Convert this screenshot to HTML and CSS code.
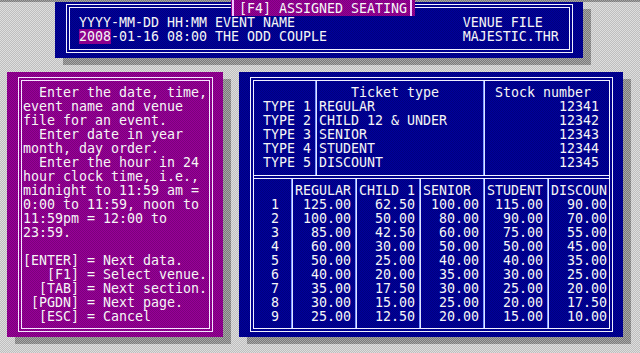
FILE: index.html
```html
<!DOCTYPE html>
<html lang="en">
<head>
  <meta charset="UTF-8" />
  <title>[F4] Assigned Seating</title>
  <link rel="stylesheet" href="styles.css">
</head>
<body>

<div class="screen">
  <div class="strip"></div>

  <!-- Event header window -->
  <section class="panel panel-blue panel-top">
    <div class="title">[F4] ASSIGNED SEATING</div>
    <div class="frame frame-top">
      <div class="line"> YYYY-MM-DD HH:MM EVENT NAME                     VENUE FILE</div>
      <div class="line"> <span class="hl">2008</span>-01-16 08:00 THE ODD COUPLE                 MAJESTIC.THR</div>
    </div>
  </section>

  <div class="main">
    <!-- Help window -->
    <section class="panel panel-magenta panel-help">
      <div class="frame frame-help">
<pre class="help">  Enter the date, time,
event name and venue
file for an event.
  Enter date in year
month, day order.
  Enter the hour in 24
hour clock time, i.e.,
midnight to 11:59 am =
0:00 to 11:59, noon to
11:59pm = 12:00 to
23:59.

[ENTER] = Next data.
   [F1] = Select venue.
  [TAB] = Next section.
 [PGDN] = Next page.
  [ESC] = Cancel</pre>
      </div>
    </section>

    <!-- Price window -->
    <section class="panel panel-blue panel-prices">
      <div class="frame frame-prices">
        <div class="tbl tbl-types">
          <div class="col w7">
 TYPE 1
 TYPE 2
 TYPE 3
 TYPE 4
 TYPE 5</div>
          <div class="vsep"></div>
          <div class="col w20">    Ticket type
REGULAR
CHILD 12 &amp; UNDER
SENIOR
STUDENT
DISCOUNT</div>
          <div class="vsep"></div>
          <div class="col w15"> Stock number
         12341
         12342
         12343
         12344
         12345</div>
        </div>

        <div class="divider"></div>

        <div class="tbl tbl-prices">
          <div class="col w4">
  1
  2
  3
  4
  5
  6
  7
  8
  9</div>
          <div class="vsep"></div>
          <div class="col w7">REGULAR
 125.00
 100.00
  85.00
  60.00
  50.00
  40.00
  35.00
  30.00
  25.00</div>
          <div class="vsep"></div>
          <div class="col w7">CHILD 1
  62.50
  50.00
  42.50
  30.00
  25.00
  20.00
  17.50
  15.00
  12.50</div>
          <div class="vsep"></div>
          <div class="col w7">SENIOR
 100.00
  80.00
  60.00
  50.00
  40.00
  35.00
  30.00
  25.00
  20.00</div>
          <div class="vsep"></div>
          <div class="col w7">STUDENT
 115.00
  90.00
  75.00
  50.00
  40.00
  30.00
  25.00
  20.00
  15.00</div>
          <div class="vsep"></div>
          <div class="col w7">DISCOUN
  90.00
  70.00
  55.00
  45.00
  35.00
  25.00
  20.00
  17.50
  10.00</div>
        </div>
      </div>
    </section>
  </div>
</div>

</body>
</html>
```

FILE: styles.css
```css
    body {
      margin: 0;
      background-color: #c8c8c8;
      font-family: "DejaVu Sans Mono", monospace;
      font-size: 13.29px;
      line-height: 14px;
      color: #f6f6f6;
    }

    /* the whole text screen, 80 x 25 cells of 8 x 14 */
    .screen {
      position: relative;
      z-index: 0;
      width: 640px;
      height: 353px;
      overflow: hidden;
      background: repeating-conic-gradient(#bebebe 0 25%, #dedede 0 50%) 0 0 / 2px 2px;
    }

    .strip {
      height: 2px;
      background: repeating-conic-gradient(#7c7c7c 0 25%, #a4a4a4 0 50%) 0 0 / 2px 2px;
    }

    .panel {
      position: relative;
      box-sizing: border-box;
      padding: 5px 10px 5px 11px;
    }

    /* half block drop shadow */
    .panel::after {
      content: '';
      position: absolute;
      left: 8px;
      top: 7px;
      width: 100%;
      height: 100%;
      z-index: -1;
      background: repeating-conic-gradient(#7a7a7a 0 25%, #a8a8a8 0 50%) 0 0 / 2px 2px;
    }

    .panel-blue {
      background: repeating-conic-gradient(#00007e 0 25%, #00009c 0 50%) 0 0 / 2px 2px;
    }

    .panel-magenta {
      background: repeating-conic-gradient(#7c007c 0 25%, #980098 0 50%) 0 0 / 2px 2px;
    }

    .frame {
      height: 100%;
      box-sizing: border-box;
      border: 4px double #f2f2ff;
      padding: 5px 2px 4px 1px;
    }

    .panel-magenta .frame {
      border-color: #f6e6ff;
    }

    /* top window */
    .panel-top {
      margin-left: 55px;
      width: 528px;
      height: 56px;
      padding-top: 2px;
    }

    .frame-top {
      padding: 8px 2px 5px 1px;
    }

    .line {
      white-space: pre;
      height: 14px;
    }

    .hl {
      background-color: #8c008c;
    }

    .title {
      position: absolute;
      left: 176px;
      top: -2px;
      z-index: 1;
      width: 184px;
      height: 16px;
      box-sizing: border-box;
      padding-left: 8px;
      line-height: 17px;
      white-space: pre;
      background:
        linear-gradient(#f0c8ff, #f0c8ff) 1px 0 / 2px 100% no-repeat,
        linear-gradient(#f0c8ff, #f0c8ff) right 3px top 0 / 2px 100% no-repeat,
        repeating-conic-gradient(#7c007c 0 25%, #980098 0 50%) 0 0 / 2px 2px;
    }

    .main {
      display: flex;
      gap: 16px;
      margin-top: 14px;
      padding-left: 7px;
    }

    .panel-help {
      width: 216px;
      height: 265px;
    }

    .help {
      margin: 0;
      font: inherit;
      line-height: 14px;
    }

    .panel-prices {
      width: 384px;
      height: 265px;
    }

    .frame-prices {
      padding: 0 2px 0 1px;
    }

    .tbl {
      display: flex;
    }

    .col {
      white-space: pre;
    }

    .tbl-types .col {
      padding: 5px 0;
    }

    .tbl-prices .col {
      padding: 5px 0 4px;
    }

    .w4 { width: 32px; }
    .w7 { width: 56px; }
    .w15 { width: 120px; }
    .w20 { width: 160px; }

    .vsep {
      width: 8px;
      background: linear-gradient(to right, transparent 4px, #7e98ff 4px 5px, #dfe6ff 5px 6px, transparent 6px);
    }

    .divider {
      margin: 0 -2px 0 -1px;
      border-top: 4px double #f2f2ff;
    }
```
